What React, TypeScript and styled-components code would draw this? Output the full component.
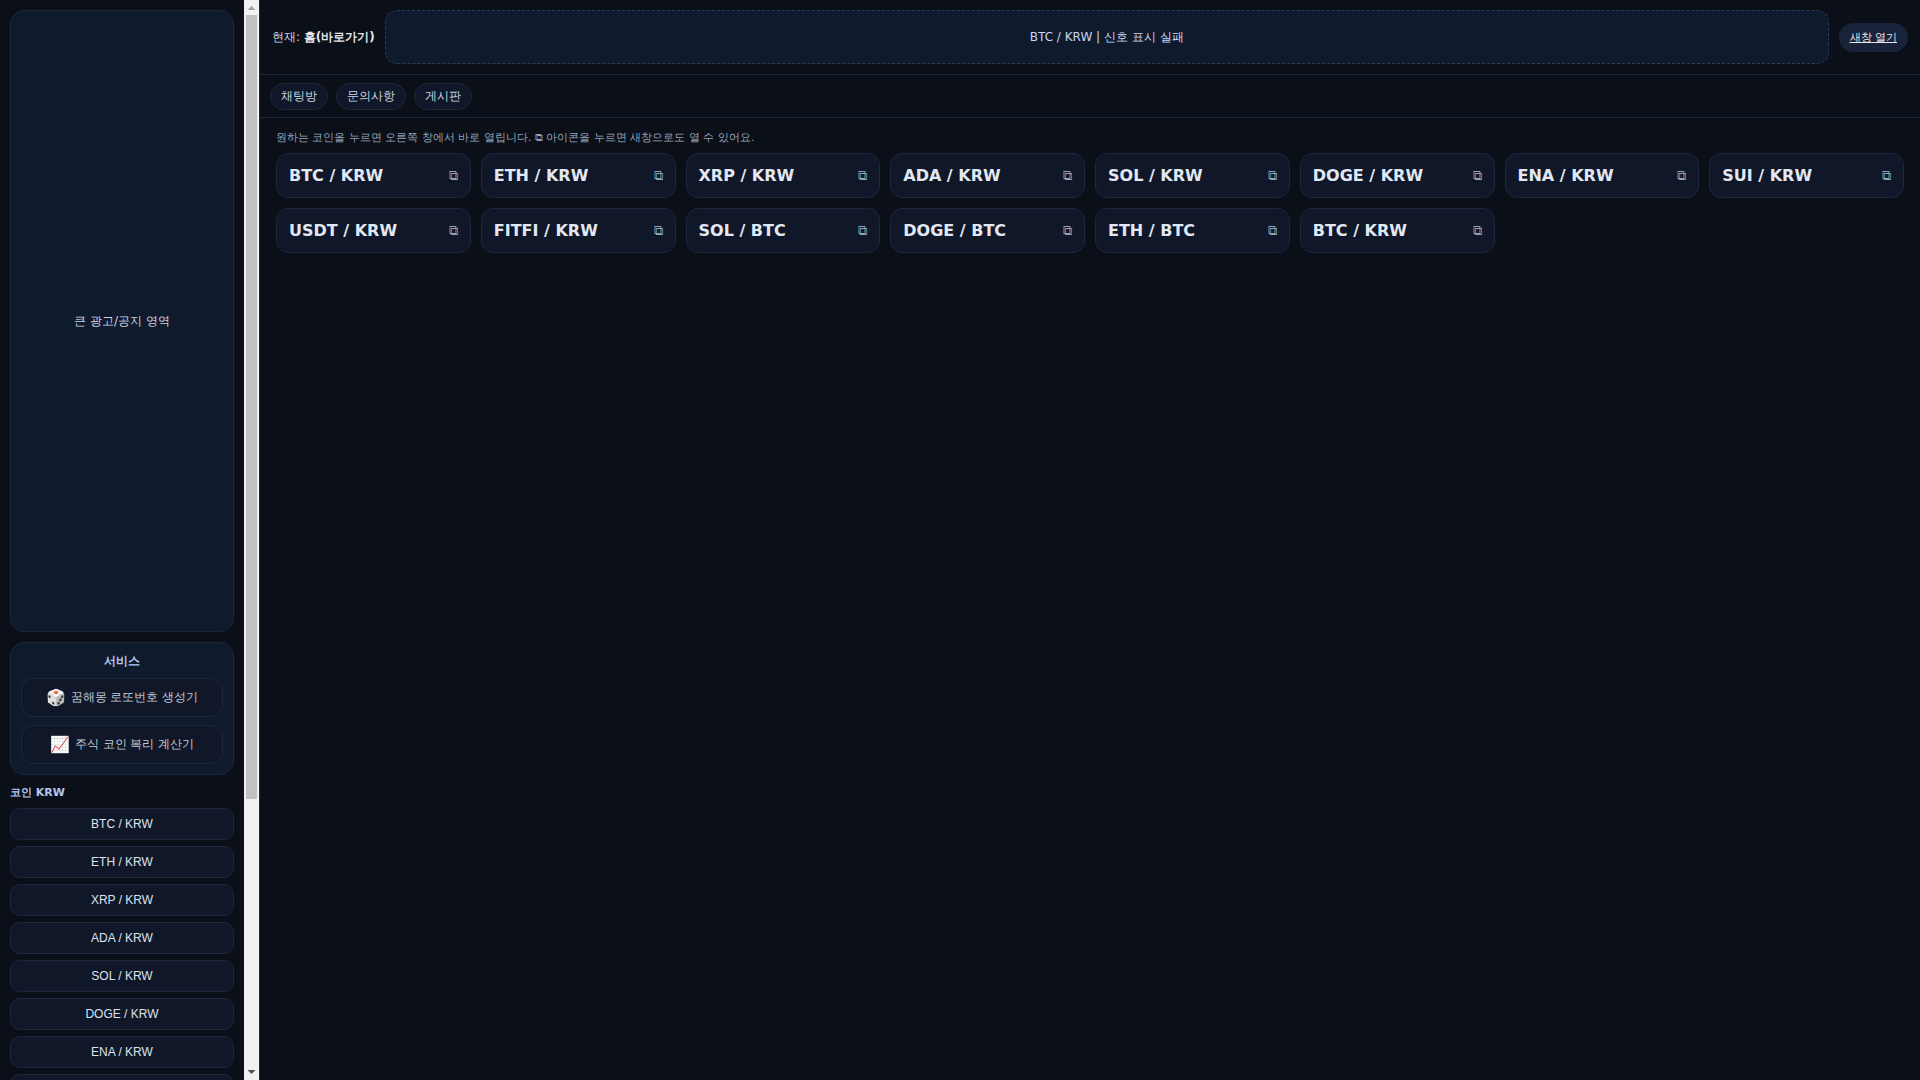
import React from "react";
import styled, { createGlobalStyle } from "styled-components";

const FONT = `"DejaVu Sans", sans-serif`;

const Global = createGlobalStyle`
  html, body { margin: 0; padding: 0; height: 100%; background: #0b0f17; overflow: hidden; }
  * { box-sizing: border-box; }
  body { font-family: ${FONT}; color: #e5e7eb; }
`;

const Shell = styled.div`
  display: flex;
  height: 100vh;
  width: 100vw;
`;

const Sidebar = styled.aside`
  flex: 0 0 260px;
  height: 100vh;
  display: flex;
  border-right: 1px solid #1c2740;
  background: #0b0f17;
`;

const SideColumn = styled.div`
  flex: 1;
  min-width: 0;
  overflow: hidden;
  padding: 10px;
  display: flex;
  flex-direction: column;
`;

const ScrollRail = styled.div`
  flex: 0 0 15px;
  display: flex;
  flex-direction: column;
  background: #f1f1f1;
`;

const ScrollArrow = styled.svg`
  flex: 0 0 15px;
  display: block;
  width: 15px;
  height: 15px;
`;

const ScrollThumb = styled.div`
  flex: 0 0 784px;
  margin: 0 2px;
  background: #c1c1c1;
`;

const ScrollRest = styled.div`
  flex: 1;
`;

const AdBox = styled.div`
  flex: 0 0 622px;
  display: flex;
  align-items: center;
  justify-content: center;
  border: 1px solid #1c2740;
  border-radius: 14px;
  background: #0f1a2c;
  color: #cbd5e1;
  font-size: 12px;
`;

const ServicePanel = styled.section`
  flex: 0 0 132px;
  margin-top: 10px;
  padding: 10px;
  border: 1px solid #1c2740;
  border-radius: 14px;
  background: #0f1a2c;
  display: flex;
  flex-direction: column;
  gap: 8px;
`;

const ServiceTitle = styled.div`
  font-size: 12px;
  font-weight: 700;
  line-height: 14px;
  margin: 1px 0 2px;
  text-align: center;
  color: #b5c7ee;
`;

const ServiceLink = styled.a`
  height: 39px;
  flex: none;
  display: flex;
  align-items: center;
  justify-content: center;
  gap: 5px;
  border: 1px solid #1c2740;
  border-radius: 12px;
  background: #0f1728;
  color: #c3cad6;
  font-size: 12px;
`;

const Emoji = styled.span`
  font-size: 16px;
  line-height: 1;
`;

const GroupTitle = styled.div`
  flex: none;
  margin: 11px 0 8px;
  font-size: 11px;
  font-weight: 700;
  line-height: 14px;
  color: #b5c7ee;
`;

const CoinButton = styled.button`
  flex: none;
  height: 32px;
  margin-bottom: 6px;
  border: 1px solid #1c2740;
  border-radius: 10px;
  background: #0f1728;
  color: #dbe3f0;
  font-family: "Liberation Sans", Arial, sans-serif;
  font-size: 12px;
  text-align: center;
`;

const Main = styled.main`
  flex: 1;
  min-width: 0;
  display: flex;
  flex-direction: column;
`;

const TopBar = styled.header`
  flex: none;
  height: 75px;
  display: flex;
  align-items: center;
  gap: 10px;
  padding: 0 12px;
  border-bottom: 1px solid #1c2740;
`;

const Current = styled.div`
  font-size: 12px;
  color: #cbd5e1;
  white-space: nowrap;
  strong { color: #e5e7eb; font-weight: 700; }
`;

const Banner = styled.div`
  flex: 1;
  height: 54px;
  display: flex;
  align-items: center;
  justify-content: center;
  border: 1px dashed #2a3a5e;
  border-radius: 12px;
  background: #0f1a2c;
  color: #c9d8f5;
  font-size: 12px;
`;

const NewWindow = styled.a`
  flex: none;
  height: 29px;
  display: flex;
  align-items: center;
  padding: 0 11px;
  border-radius: 999px;
  background: #18233a;
  color: #e5e7eb;
  font-size: 11px;
  text-decoration: underline;
`;

const TabRow = styled.nav`
  flex: none;
  height: 43px;
  display: flex;
  align-items: center;
  gap: 8px;
  padding: 0 10px;
  border-bottom: 1px solid #1c2740;
`;

const Tab = styled.a`
  height: 27px;
  display: flex;
  align-items: center;
  padding: 0 10px;
  border: 1px solid #1c2740;
  border-radius: 999px;
  background: #0f1728;
  color: #cbd5e1;
  font-size: 12px;
`;

const Content = styled.div`
  flex: 1;
  padding: 13px 16px 12px;
`;

const Hint = styled.div`
  height: 13px;
  line-height: 13px;
  margin-bottom: 9px;
  font-size: 11px;
  color: #94a3b8;
`;

const CardGrid = styled.div`
  display: grid;
  grid-template-columns: repeat(8, 1fr);
  gap: 10px;
`;

const Card = styled.div`
  height: 45px;
  display: flex;
  align-items: center;
  justify-content: space-between;
  padding: 0 12px;
  border: 1px solid #1c2740;
  border-radius: 12px;
  background: #0f1728;
`;

const CardName = styled.span`
  font-size: 16px;
  font-weight: 700;
  color: #e2e8f3;
`;

const CardIcon = styled.span`
  font-size: 13px;
  color: #94a3b8;
`;

const krw = ["BTC", "ETH", "XRP", "ADA", "SOL", "DOGE", "ENA", "SUI", "USDT", "FITFI"].map((c) => `${c} / KRW`);
const btc = ["SOL / BTC", "DOGE / BTC", "ETH / BTC"];
const cards = [...krw, ...btc, "BTC / KRW"];

export default function App() {
  return (
    <Shell>
      <Global />
      <Sidebar>
        <SideColumn>
          <AdBox>큰 광고/공지 영역</AdBox>
          <ServicePanel>
            <ServiceTitle>서비스</ServiceTitle>
            <ServiceLink><Emoji>🎲</Emoji> 꿈해몽 로또번호 생성기</ServiceLink>
            <ServiceLink><Emoji>📈</Emoji> 주식 코인 복리 계산기</ServiceLink>
          </ServicePanel>
          <GroupTitle>코인 KRW</GroupTitle>
          {krw.map((c) => (
            <CoinButton key={c}>{c}</CoinButton>
          ))}
          <GroupTitle>코인 BTC</GroupTitle>
          {btc.map((c) => (
            <CoinButton key={c}>{c}</CoinButton>
          ))}
          <GroupTitle>바로가기</GroupTitle>
          <CoinButton>BTC / KRW</CoinButton>
        </SideColumn>
        <ScrollRail>
          <ScrollArrow viewBox="0 0 15 15"><path d="M3.5 10 7.5 6 11.5 10Z" fill="#a3a3a3" /></ScrollArrow>
          <ScrollThumb />
          <ScrollRest />
          <ScrollArrow viewBox="0 0 15 15"><path d="M3.5 5 7.5 9 11.5 5Z" fill="#505050" /></ScrollArrow>
        </ScrollRail>
      </Sidebar>
      <Main>
        <TopBar>
          <Current>
            현재: <strong>홈(바로가기)</strong>
          </Current>
          <Banner>BTC / KRW | 신호 표시 실패</Banner>
          <NewWindow>새창 열기</NewWindow>
        </TopBar>
        <TabRow>
          <Tab>채팅방</Tab>
          <Tab>문의사항</Tab>
          <Tab>게시판</Tab>
        </TabRow>
        <Content>
          <Hint>원하는 코인을 누르면 오른쪽 창에서 바로 열립니다. ⧉ 아이콘을 누르면 새창으로도 열 수 있어요.</Hint>
          <CardGrid>
            {cards.map((c, i) => (
              <Card key={i}>
                <CardName>{c}</CardName>
                <CardIcon>⧉</CardIcon>
              </Card>
            ))}
          </CardGrid>
        </Content>
      </Main>
    </Shell>
  );
}
